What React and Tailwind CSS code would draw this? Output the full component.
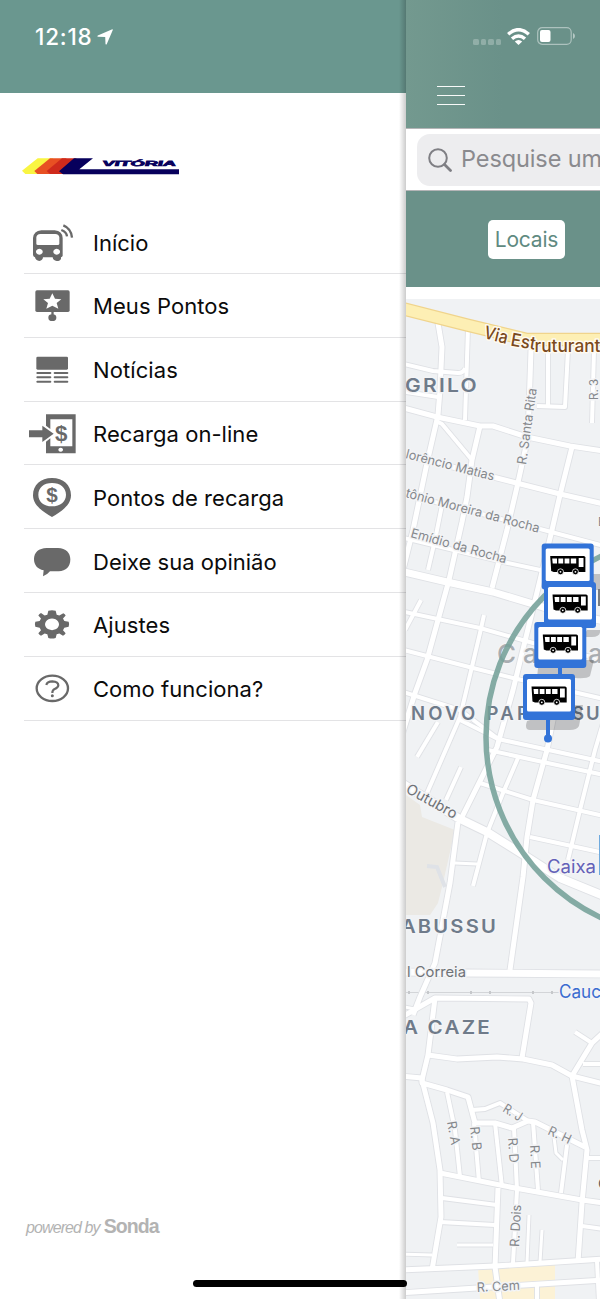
import React from 'react';

// each icon is drawn in its own viewBox, 3 units = 1px
const menuItems = [
  {
    label: 'Início',
    spacing: 'tracking-[0px]',
    viewBox: '72 21 168 150',
    icon: (
      <>
        <path fillRule="evenodd" d="M124 61H164Q187 63 188 84V137Q187 141 183 142V146Q181 153 170 153Q159 152 158 142H129Q128 152 118 153Q107 152 105 142Q100 140 99 135V84Q101 63 124 61ZM121 72Q110 73 109 82V101Q109 105 114 105H173Q178 105 178 101V82Q177 73 166 72ZM118 116A10 9 0 1 0 118.100 116ZM170 116A10 9 0 1 0 170.100 116Z" />
        <path d="M190 46Q214 56 216 83M184 60Q200 66 201 79" fill="none" stroke="#696969" strokeWidth="7" />
      </>
    ),
  },
  {
    label: 'Meus Pontos',
    spacing: 'tracking-[0.080px]',
    viewBox: '72 212 168 150',
    icon: (
      <>
        <rect x="106" y="243" width="103" height="65" rx="5" />
        <path d="M154 306H161V318H154Z" />
        <ellipse cx="157" cy="325" rx="12" ry="10" />
        <path fill="#fff" d="M157 252L165 268L184 270L170 281L175 298L157 289L139 298L144 281L130 270L149 268Z" />
      </>
    ),
  },
  {
    label: 'Notícias',
    spacing: 'tracking-[0.100px]',
    viewBox: '72 403 168 150',
    icon: (
      <>
        <rect x="109" y="441" width="95" height="39" rx="4" />
        <path d="M112 490H151M164 490H202M112 503H151M164 503H202M112 516H151M164 516H202" stroke="#696969" strokeWidth="6" strokeLinecap="round" />
      </>
    ),
  },
  {
    label: 'Recarga on-line',
    spacing: 'tracking-[0.050px]',
    viewBox: '72 595 168 150',
    icon: (
      <>
        <path fillRule="evenodd" d="M138 614H227V731H138V696L151 686V710H217V629H151V658L138 648ZM182 714A7 6 0 1 0 182.100 714Z" />
        <path d="M87 662H127V648L161 672L127 697V683H87Z" />
        <text x="184" y="693" fontSize="67" fontWeight="700" textAnchor="middle" fontFamily="Liberation Sans, sans-serif">$</text>
      </>
    ),
  },
  {
    label: 'Pontos de recarga',
    spacing: 'tracking-[0.050px]',
    viewBox: '72 6 168 150',
    icon: (
      <>
        <path fillRule="evenodd" d="M156 24C190 24 213 45 213 76C213 106 184 124 156 141C128 124 99 106 99 76C99 45 122 24 156 24ZM156 39C131 39 115 53 115 74C115 95 131 109 156 109C181 109 198 95 198 74C198 53 181 39 156 39Z" />
        <text x="156" y="95" fontSize="62" fontWeight="700" textAnchor="middle" fontFamily="Liberation Sans, sans-serif">$</text>
      </>
    ),
  },
  {
    label: 'Deixe sua opinião',
    spacing: 'tracking-[0px]',
    viewBox: '72 198 168 150',
    icon: <path d="M140 234H174C198 235 211 248 211 268C211 291 198 303 176 304H150Q142 314 129 319L131 301C112 297 102 285 102 267C102 247 116 235 140 234Z" />,
  },
  {
    label: 'Ajustes',
    spacing: 'tracking-[0.100px]',
    viewBox: '72 389 168 150',
    icon: (
      <g transform="translate(156 465) scale(1 .83)">
        <path
          fillRule="evenodd"
          d="M-11 -49Q0 -53 11 -49L14 -35L22 -32L34 -40Q39 -37 41 -32L33 -21L37 -12L50 -9Q53 0 50 9L37 12L33 21L41 32Q38 38 33 41L22 33L14 36L11 49Q0 53 -11 49L-14 36L-22 33L-33 41Q-38 38 -41 32L-33 21L-37 12L-50 9Q-53 0 -50 -9L-37 -12L-33 -21L-41 -32Q-38 -38 -33 -41L-22 -32L-14 -35ZM0 -21A21 21 0 1 0 .1 -21Z"
        />
      </g>
    ),
  },
  {
    label: 'Como funciona?',
    spacing: 'tracking-[0.030px]',
    viewBox: '72 581 168 150',
    icon: (
      <>
        <ellipse cx="157" cy="657" rx="47" ry="38" fill="none" stroke="#696969" strokeWidth="7" />
        <path d="M139 647Q141 636 157 636Q175 637 175 648Q174 655 164 659Q157 662 157 671" fill="none" stroke="#696969" strokeWidth="6.500" />
        <circle cx="157" cy="679" r="4.500" />
      </>
    ),
  },
];

// [path, width]
const roads = [
  ['M438 323L442 347L440 390L438 415L427 463L413 530L403 570', 5],
  ['M468 328L465 420', 4],
  ['M400 363L433 371L458 373Q464 373 465 368', 4],
  ['M400 391L438 397', 4],
  ['M400 407L437 417L480 426H493L527 437L570 446L604 451', 5],
  ['M438 422L442 424L472 460', 4],
  ['M480 426L472 460L467 497L462 522L449 580L438 620L427 660L415 693L402 735', 5],
  ['M443 500L435 540L428 570', 4],
  ['M531 350L528 437L517 487L507 530L492 588', 5],
  ['M548 350V405', 4],
  ['M568 350L565 407L537 406', 4],
  ['M594 350L592 423', 4],
  ['M572 447L560 495L552 530L540 580L527 633L513 690L497 747L462 817', 5],
  ['M400 454L493 477L560 494L604 504', 5],
  ['M400 493L540 529L604 546', 4],
  ['M400 537L503 562L545 571', 4],
  ['M400 611L480 628L533 643L604 660', 4],
  ['M400 649L473 668L513 678L604 699', 4],
  ['M400 691L460 710L497 738', 4],
  ['M484 615L480 633L460 717L427 793', 4],
  ['M421 600L405 630', 4],
  ['M438 722L417 757', 4],
  ['M461 767L446 800', 4],
  ['M460 720L498 739L604 762', 4],
  ['M488 750L543 762L604 775', 4],
  ['M480 783L533 800L604 816', 4],
  ['M518 758L503 793L487 833L473 886', 4],
  ['M555 710L547 750L533 800L527 837L523 877L510 970', 5],
  ['M604 720L595 750L580 810L568 860', 4],
  ['M530 837L604 853', 4],
  ['M458 822L450 883L435 963L420 997L413 1015', 5],
  ['M455 863L477 864', 3],
  ['M400 1018L435 998L529 999L531 1003L522 1058', 5],
  ['M400 1006L415 1009', 3],
  ['M435 998L428 1055L422 1080L433 1123L440 1170L441 1217L432 1270', 5],
  ['M428 1055L457 1059L497 1057L523 1059L552 1065L572 1076L604 1084', 5],
  ['M575 1032L592 1043', 4],
  ['M604 1032L592 1043L572 1076L582 1130L587 1150L582 1203L578 1262', 5],
  ['M583 1064H604', 4],
  ['M400 1076L422 1078L422 1083L447 1090L468 1097L475 1123L495 1123L512 1128L528 1121L535 1122L585 1147', 5],
  ['M472 1110L485 1109L500 1103L528 1121', 4],
  ['M447 1092L455 1130L460 1177', 4],
  ['M474 1123L479 1182', 4],
  ['M495 1123L502 1187', 4],
  ['M514 1128L517 1190L513 1263', 4],
  ['M533 1122L538 1190', 4],
  ['M567 1145L561 1193', 4],
  ['M554 1137L556 1153L563 1160', 3],
  ['M586 1158H604', 4],
  ['M440 1173L515 1188L582 1200L604 1203', 5],
  ['M442 1198L497 1205', 4],
  ['M440 1222L495 1225', 4],
  ['M457 1245H493', 3],
  ['M498 1188L495 1267L500 1303', 5],
  ['M529 1215L527 1263', 3],
  ['M542 1230L540 1262', 3],
  ['M582 1226L604 1229', 4],
  ['M400 1254L432 1255', 3],
  ['M400 1270L495 1266L604 1259', 5],
  ['M400 1293L477 1288L604 1280', 5],
  ['M597 1261L599 1303', 4],
  ['M537 1283V1303', 4],
  ['M400 571L447 582L493 592L543 607L604 621', 7],
  ['M400 782L458 818L487 832L527 857L560 878L604 896', 8],
  ['M400 972L467 973L604 974', 7],
];

// [text, x, y, rotation, font size, length]
const streets = [
  ['lorêncio Matias', 405, 458, 14.5, 13, 91],
  ['tônio Moreira da Rocha', 405, 497, 15, 13, 138],
  ['Emídio da Rocha', 410, 537, 15.5, 13, 99],
  ['R. Santa Rita', 526, 465, -82, 13, 77],
  ['R. 3', 598, 400, -90, 11.5, 21],
  ['R. A', 447, 1122, 80, 13, 24],
  ['R. B', 470, 1127, 84, 13, 24],
  ['R. D', 508, 1138, 86, 13, 25],
  ['R. E', 530, 1145, 87, 13, 24],
  ['R. J', 502, 1111, 32, 13, 20],
  ['R. H', 547, 1134, 25, 13, 24],
  ['R. Dois', 519, 1247, -87, 13, 42],
  ['R. Cem', 477, 1292, -3, 13, 43],
];

const markers = [[541.7, 543.5], [544, 582], [534.3, 622], [523, 674]];

const Marker = ({ x, y }) => (
  <g transform={`translate(${x} ${y})`}>
    <rect width="52" height="46" rx="3" fill="#3273d8" />
    <rect x="4" y="5" width="44" height="32.500" rx="1.500" fill="#fff" />
    <path d="M8.500 12.500H42Q43.700 12.500 43.700 14V28.500H12L9.500 27.500Z" fill="#000" />
    <path d="M10.500 15H15.300V20H11ZM16.700 15H21.500V20H16.700ZM22.900 15H27.700V20H22.900ZM29.100 15H34.500V20H29.100ZM37 14.500H41.800V23.500H37Z" fill="#fff" />
    <g stroke="#fff" strokeWidth=".8">
      <circle cx="18.800" cy="28.300" r="3" />
      <circle cx="33.700" cy="28.300" r="3" />
    </g>
    <circle cx="18.800" cy="28.300" r=".9" fill="#fff" />
    <circle cx="33.700" cy="28.300" r=".9" fill="#fff" />
  </g>
);

const StreetMap = () => (
  <svg className="block w-full h-[1000px]" viewBox="406 299 194 1000" fontFamily="Inter, sans-serif">
    <rect x="406" y="299" width="194" height="1000" fill="#f0f2f4" />
    <path d="M406 795L420 805L422 817L455 830L443 883L438 903L430 915H406Z" fill="#ebe9e4" />
    <path d="M478 1267L555 1265V1299H480Z" fill="#fcf2d6" />
    <path d="M427 866L437 867L445 887" fill="none" stroke="#dfe2e7" strokeWidth="4" />
    <path d="M406 992.500H560" stroke="#d3d5d8" strokeWidth="1" />
    <path d="M408 992.500h2M427 992.500h2M470 992.500h2M489 992.500h2M532 992.500h2M551 992.500h2" stroke="#c6c8cb" strokeWidth="3" />

    <g fill="none" strokeLinejoin="round">
      {roads.map(([d, w]) => <path key={d} d={d} stroke="#dfe1e5" strokeWidth={w + 1.8} />)}
      {roads.map(([d, w]) => <path key={d} d={d} stroke="#fff" strokeWidth={w} />)}
      <path d="M400 308L467 325L527 339.500H604" stroke="#f0d48c" strokeWidth="13.500" />
      <path d="M400 308L467 325L527 339.500H604" stroke="#fdefb4" strokeWidth="11" />
    </g>

    <g stroke="#f3f4f6" strokeWidth="3" strokeLinejoin="round" paintOrder="stroke" fill="#85888c">
      {streets.map(([text, x, y, angle, size, length]) => (
        <text key={text} fontSize={size} textLength={length} lengthAdjust="spacingAndGlyphs" transform={`translate(${x} ${y}) rotate(${angle})`}>{text}</text>
      ))}
      <text fontSize="14.500" fill="#6f7276" transform="translate(405 792) rotate(29)" textLength="56" lengthAdjust="spacingAndGlyphs">Outubro</text>
      <text x="407" y="977" fontSize="14.500" fill="#6f7276" textLength="59" lengthAdjust="spacingAndGlyphs">l Correia</text>
      <text x="598" y="526" fontSize="12">E</text>
      <text x="598" y="1189" fontSize="15" fill="#5b5e62">C</text>

      <g fill="#6f7b8a" fontSize="18.500" fontWeight="600">
        <text x="405" y="391.500" textLength="74" lengthAdjust="spacingAndGlyphs" letterSpacing="2">GRILO</text>
        <text x="411" y="720" textLength="118">NOVO PAR</text>
        <text x="572" y="720" letterSpacing="2">SU</text>
        <text x="401" y="932.500" textLength="97" lengthAdjust="spacingAndGlyphs" letterSpacing="2">ABUSSU</text>
        <text x="403" y="1034" textLength="89" lengthAdjust="spacingAndGlyphs" letterSpacing="2">A CAZE</text>
      </g>
      <g fill="#a9adb1" fontSize="26" fontWeight="500">
        <text x="497" y="663">C</text>
        <text x="523" y="663">a</text>
        <text x="588" y="663">a</text>
      </g>
      <text x="547" y="873" fontSize="18" fill="#6361b8" textLength="49" lengthAdjust="spacingAndGlyphs">Caixa</text>
      <text x="559" y="998" fontSize="18" fill="#3b6cd0" textLength="42" lengthAdjust="spacingAndGlyphs">Cauc</text>
      <g fill="#7b4a1c" stroke="#fffaf0" fontSize="18" fontWeight="500">
        <text transform="translate(483 338) rotate(14)" textLength="24" lengthAdjust="spacingAndGlyphs">Via</text>
        <text transform="translate(510 345.500) rotate(10)" textLength="25" lengthAdjust="spacingAndGlyphs">Est</text>
        <text x="534.500" y="351.500" textLength="66" lengthAdjust="spacingAndGlyphs">ruturant</text>
      </g>
    </g>

    <circle cx="685.500" cy="737" r="199.500" fill="none" stroke="#74a198" strokeOpacity=".88" strokeWidth="5.500" />

    <path d="M590 574H600V590H588ZM587 630H600Q601 637 592 637H583ZM538 668L586 660H594L590 676Q587 679 575 678H537ZM527 721L575 705H583L579 726Q577 730 570 730H530Q524 730 527 721Z" fill="#000" fillOpacity=".2" />
    <path d="M560 665V677M548 718V737" stroke="#3273d8" strokeWidth="4" />
    <circle cx="548" cy="738.500" r="4" fill="#3273d8" />
    <path d="M598 589H600V606H598Z" fill="#777b80" />
    {markers.map(([x, y]) => <Marker key={y} x={x} y={y} />)}
    <path d="M599 835H600V875H599Z" fill="#6faade" />
  </svg>
);

const Logo = () => (
  <svg className="block w-[158px] h-[17px]" viewBox="66 473 474 51">
    <path d="M66 511L113 474H160L128 521H76Z" fill="#f9f542" />
    <path d="M103 512L150 474H200L160 521H112Z" fill="#e85023" />
    <path d="M140 512L186 474H230L195 521H150Z" fill="#cf2a1c" />
    <path d="M177 513L222 474H279L238 507H537V522H189Z" fill="#07005c" />
    <text transform="translate(309 498) skewX(12)" fontSize="22" fontWeight="700" fontStyle="italic" fontFamily="Liberation Sans, sans-serif" fill="#07005c" stroke="#07005c" strokeWidth="2" textLength="220" lengthAdjust="spacingAndGlyphs">VITÓRIA</text>
  </svg>
);

const Drawer = () => (
  <aside className="w-[406px] flex-none flex flex-col bg-white">
    <header className="h-[93px] flex-none bg-[#6a978f] flex items-start pl-[35px] pt-[21px] text-white">
      <span className="text-[22.500px] leading-[32px] font-medium tracking-[0.800px]">12:18</span>
      <svg className="w-4 h-4 ml-[4px] mt-2" viewBox="0 0 16 16" fill="currentColor">
        <path d="M15.300 .2Q16 .3 15.800 1L9.800 15Q9.200 16 8.500 15L8.200 8L1 7.800Q-.2 7.400 .8 6.500Z" />
      </svg>
    </header>
    <div className="pl-[22px] pt-[64.500px]">
      <Logo />
    </div>
    <ul className="mt-[35.700px] ml-6">
      {menuItems.map(({ label, spacing, viewBox, icon }) => (
        <li key={label} className="h-[63.800px] flex items-center border-b border-[#e3e3e5]">
          <svg className="w-14 h-[50px] flex-none" viewBox={viewBox} fill="#696969">{icon}</svg>
          <span className={`ml-[13px] pt-[2px] text-[22px] leading-none text-[#0b0b0b] whitespace-nowrap ${spacing}`}>{label}</span>
        </li>
      ))}
    </ul>
    <footer className="mt-auto mb-[61px] ml-[26px] h-[26px] flex items-baseline gap-1 text-[#b3b3b3] font-['Liberation_Sans',sans-serif]">
      <span className="italic text-[16px] tracking-[-0.900px]">powered by</span>
      <span className="font-bold text-[19.500px] tracking-[-0.900px]">Sonda</span>
    </footer>
  </aside>
);

const MapScreen = () => (
  <main className="relative w-[194px] flex-none overflow-hidden whitespace-nowrap bg-white">
    <header className="h-[128px] bg-linear-to-r from-[#73998f] to-[#6a9189] to-50%">
      <div className="flex items-center pl-[67px] pt-[24px] h-[48px]">
        <div className="flex gap-[2px] mt-3 mr-[6px]">
          {[0, 1, 2, 3].map(i => <span key={i} className="w-[5.500px] h-[5.500px] rounded-[1.500px] bg-white/25" />)}
        </div>
        <svg className="w-[23px] h-[17px]" viewBox="0 0 23 17" fill="none" stroke="#fff" strokeWidth="3.400">
          <path d="M1.200 6.300Q11.500 -3 21.800 6.300M5 10.800Q11.500 5 18 10.800" />
          <path d="M11.500 17L7.800 13.500Q11.500 10.500 15.200 13.500Z" fill="#fff" stroke="none" />
        </svg>
        <svg className="w-[38px] h-[18px] ml-[7px]" viewBox="0 0 38 18">
          <rect x=".7" y=".7" width="33.500" height="16.600" rx="4.500" fill="none" stroke="#fff" strokeOpacity=".45" strokeWidth="1.200" />
          <rect x="3" y="3" width="10.500" height="12" rx="2" fill="#fff" />
          <path d="M36 6Q38 7 38 9T36 12Z" fill="#fff" fillOpacity=".5" />
        </svg>
      </div>
      <div className="ml-[31px] mt-[38px] w-7 h-[19px] flex flex-col justify-between">
        <span className="h-px bg-white/95" />
        <span className="h-px bg-white/95" />
        <span className="h-px bg-white/95" />
      </div>
    </header>
    <div className="h-[63px] border-y border-[#b4b5b7] pt-[5px] pl-[11px]">
      <div className="w-[300px] h-[52px] rounded-[13px] bg-[#ededef] flex items-center pl-[11px] text-[#8a8a8e]">
        <svg className="w-6 h-6" viewBox="0 0 24 24" fill="none" stroke="#7f7f84" strokeWidth="2">
          <circle cx="10" cy="10" r="8.800" />
          <path d="M16.500 16.500L22.500 22.500" strokeWidth="2.800" strokeLinecap="round" />
        </svg>
        <span className="ml-[9px] -mt-[2px] text-[23.500px] tracking-[-0.100px]">Pesquise um</span>
      </div>
    </div>
    <div className="h-24 bg-[#6a9189] pl-[82px] pt-[29px]">
      <button type="button" className="w-[77px] h-[39px] pt-px rounded-[5px] bg-white text-[#5f8a81] text-[21px] tracking-[-0.200px]">Locais</button>
    </div>
    <div className="pt-3">
      <StreetMap />
    </div>
  </main>
);

export default function App() {
  return (
    <div className="relative w-[600px] h-[1299px] flex overflow-hidden bg-white font-['Inter',sans-serif]">
      <Drawer />
      <MapScreen />
      {/* edge shadow cast by the map screen onto the drawer */}
      <div className="absolute left-[399px] top-0 w-[7px] h-full bg-linear-to-r from-transparent to-black/20" />
      <div className="absolute left-[193px] top-[1280px] w-[214px] h-[7px] rounded-full bg-black" />
    </div>
  );
}
